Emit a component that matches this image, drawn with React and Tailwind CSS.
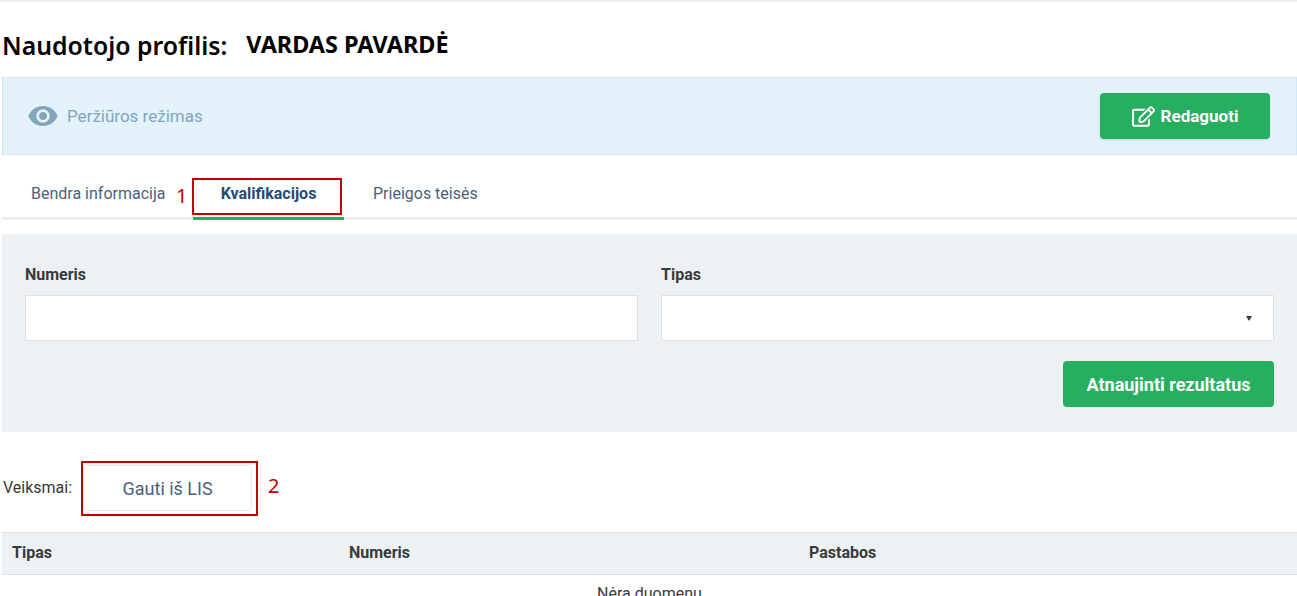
import React from "react";
import { FaRegEdit } from "react-icons/fa";
import { MdRemoveRedEye } from "react-icons/md";

const App = () => {
  return (
    <div className="relative h-[596px] w-[1297px] overflow-hidden bg-white font-['Roboto',sans-serif] text-[#373a3c]">
      <div className="h-[2px] bg-[#eeeeee]" />

      {/* Title */}
      <div className="flex h-[75px] items-center pl-[2px] pt-[11px] font-['Noto_Sans',sans-serif] text-black">
        <h1 className="text-[24.8px] font-semibold leading-none">Naudotojo profilis:</h1>
        <span className="ml-[19px] text-[23.4px] font-bold leading-none">VARDAS PAVARDĖ</span>
      </div>

      <div className="pl-[2px]">
        {/* Mode banner */}
        <div className="flex h-[78px] items-center justify-between border border-[#d3e6f3] bg-[#e4f2fc] pl-[24px] pr-[26px]">
          <div className="flex items-center gap-[8px] text-[17px] text-[#83a5bc]">
            <MdRemoveRedEye className="text-[32px]" />
            <span className="pt-[1px]">Peržiūros režimas</span>
          </div>
          <button className="flex h-[46px] w-[170px] items-center justify-center gap-[6px] rounded-[4px] bg-[#27ae60] text-[17px] font-bold text-white shadow-sm">
            <FaRegEdit className="text-[23px]" />
            <span className="pt-[1px]">Redaguoti</span>
          </button>
        </div>

        {/* Tabs */}
        <div className="mt-[22px] flex h-[43px] border-b-[3px] border-[#eeeeee] text-[16px] text-[#4c6278]">
          <div className="w-[191px] pl-[29px] pt-[5px]">Bendra informacija</div>
          <div className="-mb-[3px] h-[43px] w-[151px] border-b-[3px] border-[#27ae60] pt-[5px] text-center font-bold text-[#1f4c78]">Kvalifikacijos</div>
          <div className="pl-[29px] pt-[5px]">Prieigos teisės</div>
        </div>

        {/* Filter */}
        <div className="mt-[14px] h-[198px] bg-[#edf1f4] pl-[23px] pr-[23px] pt-[32px]">
          <div className="grid grid-cols-2 gap-[23px]">
            <div>
              <label className="block text-[16px] font-bold leading-[18px]">Numeris</label>
              <input className="mt-[11px] block h-[46px] w-full border border-[#dde1e5] bg-white" />
            </div>
            <div>
              <label className="block text-[16px] font-bold leading-[18px]">Tipas</label>
              <div className="mt-[11px] flex h-[46px] items-center justify-end border border-[#dde1e5] bg-white pr-[21px]">
                <span className="mt-[1px] border-x-[3px] border-t-[5px] border-x-transparent border-t-[#373a3c]" />
              </div>
            </div>
          </div>
          <div className="mt-[20px] flex justify-end">
            <button className="h-[46px] w-[211px] rounded-[4px] bg-[#27ae60] text-[18px] font-bold text-white">Atnaujinti rezultatus</button>
          </div>
        </div>

        {/* Actions */}
        <div className="mt-[33px] flex h-[46px] items-center pl-[1px] text-[16px]">
          <span>Veiksmai:</span>
          <button className="ml-[11px] h-[46px] w-[169px] shrink-0 rounded-[4px] border border-[#e4e6e9] bg-white text-[18px] text-[#4c6278]">Gauti iš LIS</button>
        </div>

        {/* Table */}
        <div className="mt-[21px]">
          <div className="flex h-[43px] items-center border-y border-[#dfe1e3] bg-[#edf1f4] pb-[1px] text-[16px] font-bold">
            <div className="w-[337px] pl-[10px]">Tipas</div>
            <div className="w-[460px] pl-[10px]">Numeris</div>
            <div className="pl-[10px]">Pastabos</div>
          </div>
          <div className="pt-[10px] text-center text-[16px] leading-[17px]">Nėra duomenų</div>
        </div>
      </div>

      {/* Annotations */}
      <div className="absolute left-[192px] top-[178px] h-[37px] w-[150px] border-2 border-[#c00000]" />
      <span className="absolute left-[176px] top-[183px] font-['Noto_Sans',sans-serif] text-[20px] leading-[26px] text-[#c00000]">1</span>
      <div className="absolute left-[81px] top-[461px] h-[55px] w-[177px] border-2 border-[#c00000]" />
      <span className="absolute left-[268px] top-[473px] font-['Noto_Sans',sans-serif] text-[20px] leading-[26px] text-[#c00000]">2</span>
    </div>
  );
};

export default App;
